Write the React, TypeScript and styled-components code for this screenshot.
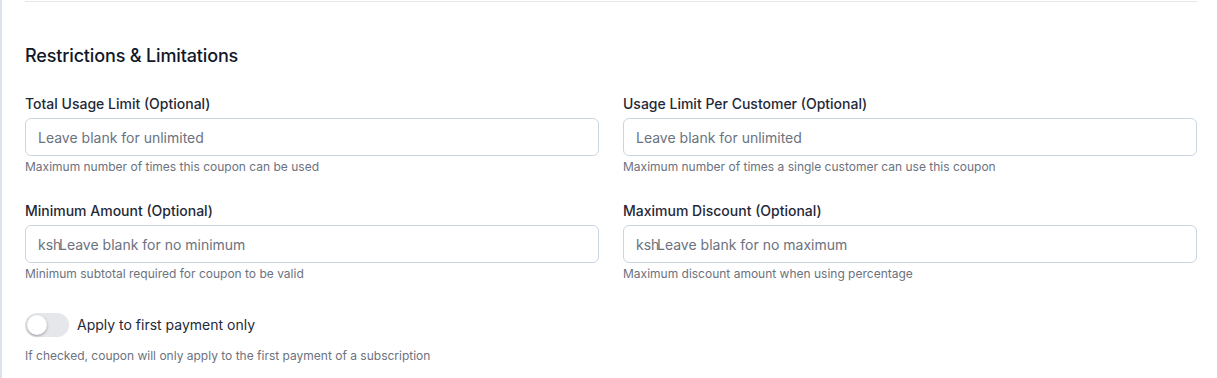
import React from "react";
import styled, { createGlobalStyle } from "styled-components";

const Global = createGlobalStyle`
  html, body { margin: 0; padding: 0; background: #ffffff; }
  body { font-family: Inter, "Noto Sans", "Liberation Sans", sans-serif; -webkit-font-smoothing: antialiased; }
  * { box-sizing: border-box; }
`;

const Panel = styled.div`
  border-left: 2px solid #dce3ee;
  padding: 1px 20px 0 23px;
  min-height: 378px;
`;

const Section = styled.section`
  border-top: 1px solid #e5e7eb;
  padding-top: 40px;
`;

const Heading = styled.h3`
  margin: 0 0 24px;
  font-size: 18px;
  line-height: 28px;
  font-weight: 500;
  letter-spacing: -0.15px;
  color: #111827;
`;

const Grid = styled.div`
  display: grid;
  grid-template-columns: 1fr 1fr;
  column-gap: 24px;
  row-gap: 26px;
`;

const Field = styled.div`
  display: flex;
  flex-direction: column;
`;

const Label = styled.label`
  font-size: 14px;
  line-height: 20px;
  font-weight: 500;
  color: #1f2937;
  margin-bottom: 4px;
`;

const InputWrap = styled.div`
  position: relative;
`;

const Prefix = styled.span`
  position: absolute;
  left: 13px;
  top: 50%;
  transform: translateY(-50%);
  font-size: 14px;
  color: #6b7280;
  pointer-events: none;
`;

const Input = styled.input<{ $prefixed?: boolean }>`
  width: 100%;
  height: 38px;
  border: 1px solid #cbd5e1;
  border-radius: 6px;
  padding: 0 12px 0 ${(p) => (p.$prefixed ? "33px" : "12px")};
  font-family: inherit;
  font-size: 14px;
  color: #111827;
  background: #fff;
  outline: none;
  &::placeholder { color: #6b7280; }
`;

const Help = styled.p`
  margin: 3px 0 0;
  font-size: 12px;
  line-height: 16px;
  color: #6b7280;
`;

const ToggleRow = styled.div`
  display: flex;
  align-items: center;
  gap: 8px;
  margin-top: 31px;
`;

const Track = styled.span`
  position: relative;
  display: inline-block;
  width: 44px;
  height: 24px;
  border-radius: 12px;
  background: #e5e7eb;
`;

const Knob = styled.span`
  position: absolute;
  left: 2px;
  top: 2px;
  width: 20px;
  height: 20px;
  border-radius: 50%;
  background: #fff;
  box-shadow: 0 1px 3px rgba(0, 0, 0, 0.25), 0 1px 2px rgba(0, 0, 0, 0.1);
`;

const ToggleLabel = styled.span`
  font-size: 14px;
  line-height: 20px;
  color: #1f2937;
`;

const ToggleHelp = styled(Help)`
  margin-top: 11px;
`;

type F = { label: string; placeholder: string; help: string; prefix?: string };

const fields: F[] = [
  { label: "Total Usage Limit (Optional)", placeholder: "Leave blank for unlimited", help: "Maximum number of times this coupon can be used" },
  { label: "Usage Limit Per Customer (Optional)", placeholder: "Leave blank for unlimited", help: "Maximum number of times a single customer can use this coupon" },
  { label: "Minimum Amount (Optional)", placeholder: "Leave blank for no minimum", help: "Minimum subtotal required for coupon to be valid", prefix: "ksh" },
  { label: "Maximum Discount (Optional)", placeholder: "Leave blank for no maximum", help: "Maximum discount amount when using percentage", prefix: "ksh" },
];

export default function App() {
  return (
    <>
      <Global />
      <Panel>
        <Section>
          <Heading>Restrictions &amp; Limitations</Heading>
          <Grid>
            {fields.map((f) => (
              <Field key={f.label}>
                <Label>{f.label}</Label>
                <InputWrap>
                  {f.prefix && <Prefix>{f.prefix}</Prefix>}
                  <Input placeholder={f.placeholder} $prefixed={!!f.prefix} />
                </InputWrap>
                <Help>{f.help}</Help>
              </Field>
            ))}
          </Grid>
          <ToggleRow>
            <Track>
              <Knob />
            </Track>
            <ToggleLabel>Apply to first payment only</ToggleLabel>
          </ToggleRow>
          <ToggleHelp>If checked, coupon will only apply to the first payment of a subscription</ToggleHelp>
        </Section>
      </Panel>
    </>
  );
}
